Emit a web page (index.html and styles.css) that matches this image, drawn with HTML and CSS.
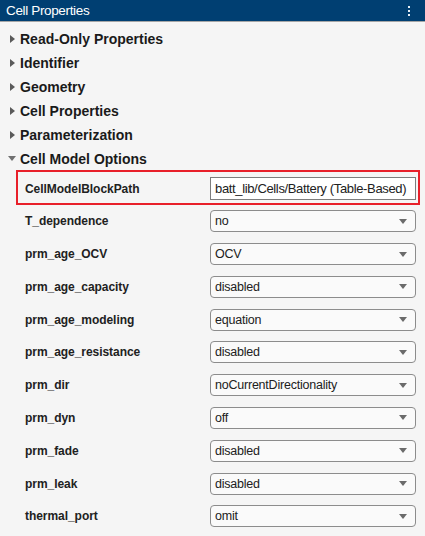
FILE: index.html
```html
<!DOCTYPE html>
<html>
<head>
<meta charset="utf-8">
<link rel="stylesheet" href="styles.css">
</head>
<body>
<div class="panel">
  <div class="titlebar">
    <span class="title">Cell Properties</span>
    <span class="kebab"><i></i><i></i><i></i></span>
  </div>
  <div class="sections">
    <div class="section"><span class="tri-right"></span><span class="stitle">Read-Only Properties</span></div>
    <div class="section"><span class="tri-right"></span><span class="stitle">Identifier</span></div>
    <div class="section"><span class="tri-right"></span><span class="stitle">Geometry</span></div>
    <div class="section"><span class="tri-right"></span><span class="stitle">Cell Properties</span></div>
    <div class="section"><span class="tri-right"></span><span class="stitle">Parameterization</span></div>
    <div class="section open"><span class="tri-down"></span><span class="stitle">Cell Model Options</span></div>
  </div>
  <div class="props">
    <div class="prop highlight">
      <span class="label">CellModelBlockPath</span>
      <div class="textbox">batt_lib/Cells/Battery (Table-Based)</div>
    </div>
    <div class="prop"><span class="label">T_dependence</span><div class="dropdown"><span>no</span><i class="arrow"></i></div></div>
    <div class="prop"><span class="label">prm_age_OCV</span><div class="dropdown"><span>OCV</span><i class="arrow"></i></div></div>
    <div class="prop"><span class="label">prm_age_capacity</span><div class="dropdown"><span>disabled</span><i class="arrow"></i></div></div>
    <div class="prop"><span class="label">prm_age_modeling</span><div class="dropdown"><span>equation</span><i class="arrow"></i></div></div>
    <div class="prop"><span class="label">prm_age_resistance</span><div class="dropdown"><span>disabled</span><i class="arrow"></i></div></div>
    <div class="prop"><span class="label">prm_dir</span><div class="dropdown"><span>noCurrentDirectionality</span><i class="arrow"></i></div></div>
    <div class="prop"><span class="label">prm_dyn</span><div class="dropdown"><span>off</span><i class="arrow"></i></div></div>
    <div class="prop"><span class="label">prm_fade</span><div class="dropdown"><span>disabled</span><i class="arrow"></i></div></div>
    <div class="prop"><span class="label">prm_leak</span><div class="dropdown"><span>disabled</span><i class="arrow"></i></div></div>
    <div class="prop"><span class="label">thermal_port</span><div class="dropdown"><span>omit</span><i class="arrow"></i></div></div>
  </div>
</div>
</body>
</html>
```

FILE: styles.css
```css
html, body {
  margin: 0;
  padding: 0;
}
body {
  width: 425px;
  height: 536px;
  overflow: hidden;
  background: #f5f5f5;
  font-family: "Liberation Sans", Arial, sans-serif;
  color: #212121;
}
.panel {
  width: 425px;
  height: 536px;
  background: #f5f5f5;
}
.titlebar {
  height: 21px;
  background: #003f72;
  border-bottom: 1px solid #a6a6a6;
  display: flex;
  align-items: center;
  justify-content: space-between;
  padding: 0 15px 0 6px;
  box-sizing: content-box;
}
.title {
  color: #ffffff;
  font-size: 13.5px;
  letter-spacing: -0.35px;
}
.kebab {
  display: flex;
  flex-direction: column;
  gap: 2px;
}
.kebab i {
  display: block;
  width: 2px;
  height: 2px;
  background: #e6eef5;
}
.sections {
  padding-top: 5px;
}
.section {
  height: 24px;
  display: flex;
  align-items: center;
  padding-left: 10px;
}
.section.open {
  height: 23px;
  padding-left: 8px;
}
.tri-right {
  width: 0;
  height: 0;
  border-top: 4px solid transparent;
  border-bottom: 4px solid transparent;
  border-left: 5px solid #5a5a5a;
  margin-right: 5px;
}
.tri-down {
  width: 0;
  height: 0;
  border-left: 4px solid transparent;
  border-right: 4px solid transparent;
  border-top: 5px solid #707070;
  margin-right: 4px;
}
.stitle {
  font-weight: bold;
  font-size: 14px;
  color: #1a1a1a;
}
.props {
  padding: 0 5px 0 16px;
}
.prop {
  display: grid;
  grid-template-columns: 1fr 206px;
  align-items: center;
  height: 32.78px;
  padding: 0 4px 0 9px;
}
.prop.highlight {
  height: 35px;
  box-sizing: border-box;
  border: 2px solid #e8202a;
  padding: 5px 2px 3px 7px;
}
.label {
  font-weight: bold;
  font-size: 12px;
  letter-spacing: -0.05px;
  color: #212121;
}
.textbox {
  height: 23px;
  box-sizing: border-box;
  border: 1px solid #7d7d7d;
  background: #ffffff;
  font-size: 13px;
  letter-spacing: -0.35px;
  line-height: 21px;
  padding-left: 4px;
  white-space: nowrap;
  overflow: hidden;
}
.dropdown {
  height: 22px;
  box-sizing: border-box;
  border: 1px solid #8c8c8c;
  border-radius: 4px;
  background: #fafafa;
  font-size: 12.5px;
  letter-spacing: -0.22px;
  display: flex;
  align-items: center;
  justify-content: space-between;
  padding: 0 8px 0 4px;
}
.arrow {
  width: 0;
  height: 0;
  border-left: 4px solid transparent;
  border-right: 4px solid transparent;
  border-top: 5px solid #6b6b6b;
}
```
